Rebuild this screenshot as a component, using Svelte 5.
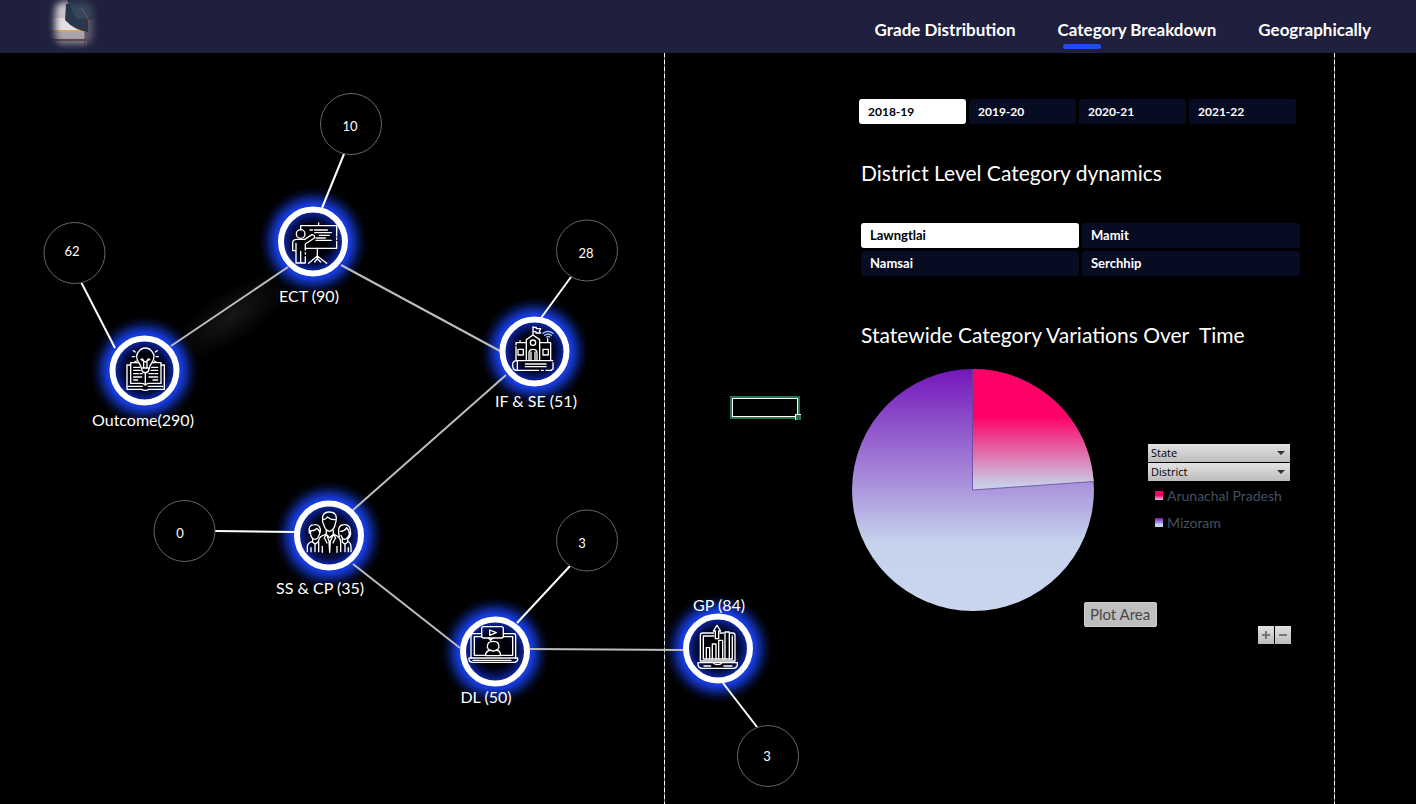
<script>
  const navItems = ['Grade Distribution', 'Category Breakdown', 'Geographically'];
  const years = ['2018-19', '2019-20', '2020-21', '2021-22'];
  const districts = ['Lawngtlai', 'Mamit', 'Namsai', 'Serchhip'];
  let page = $state('Category Breakdown');
  let year = $state('2018-19');
  let district = $state('Lawngtlai');

  const links = [
    [171, 346, 288, 267],
    [341, 265, 500, 351],
    [506, 375, 353, 510],
    [353, 564, 460, 648],
    [530, 649, 684, 650]
  ];
  const bubbles = [
    { value: 10, x: 351, y: 124, tx: 350, ty: 131, line: [344, 154, 322, 208] },
    { value: 62, x: 74.5, y: 253, tx: 72, ty: 256, line: [80, 280, 115, 348] },
    { value: 28, x: 587, y: 250.5, tx: 586, ty: 258, line: [571, 277, 541, 318] },
    { value: 0, x: 184.5, y: 531, tx: 180, ty: 538, line: [215, 531, 295, 532] },
    { value: 3, x: 587, y: 540.5, tx: 582, ty: 548, line: [570, 566, 517, 623] },
    { value: 3, x: 768, y: 756, tx: 767, ty: 761, line: [723, 683, 757, 727] }
  ];
  const nodes = [
    { label: 'ECT (90)', x: 313, y: 241.5, tx: 309, ty: 302 },
    { label: 'Outcome(290)', x: 144.5, y: 370.5, tx: 143, ty: 426 },
    { label: 'IF & SE (51)', x: 534.5, y: 351.5, tx: 536, ty: 407 },
    { label: 'SS & CP (35)', x: 329, y: 535.5, tx: 320, ty: 594 },
    { label: 'DL (50)', x: 495, y: 651.5, tx: 486, ty: 703 },
    { label: 'GP (84)', x: 718, y: 648.5, tx: 719, ty: 611 }
  ];
</script>

<div class="app">
  <header>
    <svg class="logo" viewBox="0 0 100 53" width="100" height="53" role="img" aria-label="Education">
      <defs>
        <filter id="soft" x="-40%" y="-40%" width="180%" height="180%"><feGaussianBlur stdDeviation="3.5" /></filter>
        <filter id="fine"><feGaussianBlur stdDeviation="0.5" /></filter>
        <mask id="fade"><rect x="30" y="2" width="38" height="42" rx="8" fill="#fff" filter="url(#soft)" /></mask>
      </defs>
      <g mask="url(#fade)">
        <rect x="18" y="0" width="42" height="53" fill="#c9c5ca" />
        <rect x="60" y="18" width="16" height="35" fill="#5b596e" />
        <rect x="18" y="18" width="33" height="12" fill="#e4e1e2" />
        <rect x="18" y="30" width="42" height="2" fill="#d9a565" />
        <rect x="18" y="32" width="42" height="7" fill="#aaa4aa" />
        <rect x="18" y="39" width="43" height="2" fill="#6e4a4d" />
        <rect x="18" y="41" width="44" height="10" fill="#8b8991" />
        <g filter="url(#fine)">
          <path d="M41 4 69 0 74 16 64 20 63 32Q49 30 40 20Z" fill="#29394c" />
          <path d="M42 0 72 0 76 18 52 19Z" fill="#35475a" />
          <path d="M56 8 63 18 65 32" fill="none" stroke="#84545c" />
          <path d="M60 31V52" stroke="#6e4a4d" />
        </g>
      </g>
    </svg>
    <nav>
      {#each navItems as item}
        <a href="#{item.replace(' ', '-')}" class:active={page === item} onclick={() => (page = item)}>{item}</a>
      {/each}
    </nav>
  </header>

  <main>
    <svg class="network" viewBox="0 53 851 751" role="img" aria-label="Category network">
      <defs>
        <radialGradient id="glow">
          <stop offset="0" stop-color="#000" />
          <stop offset="0.3" stop-color="#00010a" />
          <stop offset="0.42" stop-color="#050f4c" />
          <stop offset="0.52" stop-color="#0d2396" />
          <stop offset="0.6" stop-color="#1a3ee4" />
          <stop offset="0.68" stop-color="#1539d6" />
          <stop offset="0.78" stop-color="#1130ae" stop-opacity="0.75" />
          <stop offset="0.88" stop-color="#0b2078" stop-opacity="0.4" />
          <stop offset="1" stop-color="#061040" stop-opacity="0" />
        </radialGradient>
        <radialGradient id="haze">
          <stop offset="0" stop-color="#fff" stop-opacity="0.09" />
          <stop offset="1" stop-color="#fff" stop-opacity="0" />
        </radialGradient>
      </defs>

      <path d="M664.5 53V804" stroke="#777" />
      <path d="M664.5 53V804" stroke="#fff" stroke-dasharray="4 3" />
      <ellipse cx="232" cy="316" rx="68" ry="26" fill="url(#haze)" transform="rotate(-34 232 316)" />

      {#each nodes as n}
        <circle cx={n.x} cy={n.y} r="55" fill="url(#glow)" />
      {/each}
      {#each links as [x1, y1, x2, y2]}
        <line {x1} {y1} {x2} {y2} stroke="#bdbdbd" stroke-width="2" />
      {/each}
      {#each bubbles as b}
        <line x1={b.line[0]} y1={b.line[1]} x2={b.line[2]} y2={b.line[3]} stroke="#fff" stroke-width="2" />
        <circle cx={b.x} cy={b.y} r="30.5" fill="#000" stroke="#666" stroke-width="1" />
        <text class="value" x={b.tx} y={b.ty}>{b.value}</text>
      {/each}
      {#each nodes as n}
        <circle cx={n.x} cy={n.y} r="32" fill="none" stroke="#fff" stroke-width="6" />
        <text class="label" x={n.tx} y={n.ty}>{n.label}</text>
      {/each}

      <!-- presenter at a board -->
      <g class="icon" transform="translate(260 190) scale(0.3333)">
        <circle cx="122" cy="132" r="13" />
        <path d="M122 119V107H230V138M230 144V148M230 154V175H136M176 107V99" />
        <path d="M150 120H158M164 120H202M164 128H214M178 136H208M168 144H196M168 151H214" />
        <path d="M172 175V206M172 198 146 220M172 198 200 220M172 206 164 216M172 206 182 216" />
        <path d="M98 182V160Q98 148 110 148H134L156 134Q166 136 163 144L136 162V180M136 188V192M136 200V219H108V160M122 184V219M98 182H108" />
      </g>

      <!-- open book and bulb -->
      <g class="icon" transform="translate(85 320) scale(0.3333)">
        <path d="M170 148Q168 136 160 126Q150 108 160 96Q168 84 181 84Q194 84 202 96Q212 108 202 126Q194 136 192 148Q190 158 181 158Q172 158 170 148ZM172 144H190M168 118Q174 114 176 124V142M194 118Q188 114 186 124V142M168 118 181 126 194 118" />
        <path d="M142 110H149M213 110H220M145 92 151 96M217 92 211 96M148 127 154 123M214 127 208 123" />
        <path d="M161 128H137V190H170Q178 190 181 196Q184 190 192 190H228V128H202M181 160V196" />
        <path d="M137 135H126V208H170Q181 214 192 208H238V135H228M130 199H172M190 199H233" />
        <path d="M146 142H164M146 151H166M146 161H160M165 161H172M146 171H170M146 180H158M200 142H218M198 151H218M192 161H206M210 161H218M192 171H218M204 180H218" />
      </g>

      <!-- school on a book -->
      <g class="icon" transform="translate(480 300) scale(0.3333)">
        <path d="M159 104V80M159 82H169V86H182L178 93L182 99H168V95H159M139 180V119L159 105 179 119V180M139 128H108V134M108 140V180M179 128H212V180M120 128V122M203 128V116" />
        <circle cx="159" cy="128" r="8" />
        <path d="M147 180V158Q147 148 159 148Q171 148 171 158V180M153 180V156M165 180V156M114 148H130V165H114ZM189 148H205V165H189Z" />
        <path d="M218 182H110Q98 182 98 195Q98 211 110 211H176M184 211H190M198 211H214L219 206V188M112 182V211M136 192H198M136 200H198" />
        <path d="M189 100Q203 88 219 100M194 106Q204 98 214 106M200 111Q204 107 209 111" stroke="#a9c8ff" />
      </g>

      <!-- three people -->
      <g class="icon" transform="translate(265 485) scale(0.3333)">
        <path d="M173 105Q170 83 190 81Q213 80 214 98Q214 108 211 116Q208 135 194 139Q180 136 176 118Q171 111 173 102Q181 106 187 96Q196 104 210 104M184 137V148L194 158 205 148V137M183 146 178 160M206 146 212 160" />
        <path d="M181 149Q163 153 161 166V200M208 149Q225 154 227 170V200M187 154 192 168 194 202M203 154 196 168 194 202M172 184V202M216 184V202M180 162 186 174M210 162 204 174" />
        <path d="M133 144Q128 119 148 119Q168 118 166 141M136 137Q149 139 155 130Q165 136 164 146Q159 163 151 163Q140 163 137 149ZM143 163V172L151 178 159 170M143 169Q127 173 127 186V200M150 178V200M138 188V200" />
        <path d="M223 155Q215 119 237 119Q258 117 257 147Q255 157 249 162M227 139Q240 138 245 128Q254 137 253 148Q248 162 239 163Q231 161 228 151M232 161V171L240 178 248 171V162M248 168Q258 173 258 187V200M240 178V200M250 188V200" />
      </g>

      <!-- online class -->
      <g class="icon" transform="translate(445 600) scale(0.3333)">
        <path d="M110 101H83Q78 101 78 108V174M175 101H207Q212 101 212 108V174M110 110H88V166H122M175 110H203V166H166" />
        <rect x="110" y="80" width="65" height="34" rx="6" />
        <path d="M134 90V106L154 98ZM130 114 137 121 144 114" />
        <path d="M127 142Q126 124 145 124Q163 124 162 142Q157 153 145 153Q131 153 127 142ZM122 167V161Q126 151 137 150M153 150Q165 152 166 161V167H122" />
        <path d="M72 174H218V179Q216 187 208 187H82Q74 187 72 179ZM84 181H198M126 174H164" />
      </g>

      <!-- growth chart on a laptop -->
      <g class="icon" transform="translate(670 590) scale(0.3333)">
        <path d="M131 129H98Q91 129 91 136V213H195V136Q195 129 188 129H181M131 138H100V207H187V138M150 129H161" />
        <path d="M109 207V173H119V207M127 207V162H138V207M146 207V151H158V207M165 207V126H178V207" />
        <path d="M136 146V123H130L141 106 152 123H146V146Z" />
        <path d="M84 218H202V225Q200 235 190 235H96Q86 235 84 225ZM130 218Q132 224 143 224Q154 224 156 218M102 228H122M162 228H186" />
      </g>

      <rect x="731" y="397" width="68" height="21" fill="none" stroke="#27734b" stroke-width="2" />
      <rect x="732.5" y="398.5" width="65" height="18" fill="#000" stroke="#fff" />
      <rect x="795" y="414" width="6" height="6" fill="#fff" />
      <rect x="796" y="415" width="5" height="5" fill="#2f6f4d" />
    </svg>

    <section class="panel">
      <div class="years">
        {#each years as y}
          <button class="slicer" class:on={year === y} onclick={() => (year = y)}>{y}</button>
        {/each}
      </div>

      <h2>District Level Category dynamics</h2>
      <div class="districts">
        {#each districts as d}
          <button class="slicer" class:on={district === d} onclick={() => (district = d)}>{d}</button>
        {/each}
      </div>

      <h2 class="second">Statewide Category Variations Over&nbsp; Time</h2>
      <div class="chart">
        <svg class="pie" viewBox="0 0 242 242" role="img" aria-label="Share by state">
          <defs>
            <linearGradient id="violet" x1="0" y1="0" x2="0" y2="1">
              <stop offset="0" stop-color="#7416ba" />
              <stop offset="0.48" stop-color="#aa92dc" />
              <stop offset="0.72" stop-color="#c6d3ec" />
              <stop offset="1" stop-color="#c9d6ee" />
            </linearGradient>
            <linearGradient id="pink" x1="0" y1="0" x2="0" y2="1">
              <stop offset="0" stop-color="#ff0066" />
              <stop offset="0.39" stop-color="#ff0066" />
              <stop offset="0.7" stop-color="#e070ac" />
              <stop offset="0.96" stop-color="#c9cee8" />
            </linearGradient>
          </defs>
          <circle cx="121" cy="121" r="121" fill="url(#violet)" />
          <path d="M121 121V0A121 121 0 0 1 241.700 112.500Z" fill="url(#pink)" />
          <path d="M120.500 0V121L241.700 112.500" fill="none" stroke="#65489a" stroke-width="0.8" />
        </svg>
        <span class="tip">Plot Area</span>
        <div class="legend">
          <select aria-label="State"><option>State</option></select>
          <select aria-label="District"><option>District</option></select>
          <ul>
            <li><i class="key pink"></i>Arunachal Pradesh</li>
            <li><i class="key violet"></i>Mizoram</li>
          </ul>
        </div>
      </div>
      <div class="zoom">
        <button aria-label="Expand field"><svg viewBox="0 0 10 10" width="10" height="10"><path d="M1 5H9M5 1V9" /></svg></button>
        <button aria-label="Collapse field"><svg viewBox="0 0 10 10" width="10" height="10"><path d="M1 5H9" /></svg></button>
      </div>
    </section>
  </main>
</div>

<style>
  :global(body) { margin: 0; background: #000; }
  .app { min-height: 100vh; background: #000; color: #fff; font-family: Lato, "Open Sans", sans-serif; overflow: hidden; }
  header { display: flex; justify-content: space-between; height: 53px; padding: 0 45px 0 25px; background: #1f203d; }
  .logo { display: block; }
  nav { display: flex; gap: 42px; padding-top: 20px; }
  nav a { position: relative; color: #fff; text-decoration: none; font-size: 17px; line-height: 20px; font-weight: 700; white-space: nowrap; }
  nav a.active::after { content: ""; position: absolute; left: 5px; top: 24px; width: 38px; height: 5px; border-radius: 3px; background: #1f4df5; }

  main { display: grid; grid-template-columns: 851fr 484fr 81fr; align-items: stretch; }
  .network { display: block; width: 100%; height: auto; }
  .network text { fill: #fff; text-anchor: middle; }
  .value { font-size: 13px; }
  .label { font-size: 16px; }
  .icon { fill: none; stroke: #fff; stroke-width: 4; stroke-linecap: round; stroke-linejoin: round; }

  .panel {
    padding-top: 46px;
    background: repeating-linear-gradient(#fff 0 4px, #777 4px 7px) right top / 1px 100% no-repeat;
  }
  .years { display: grid; grid-template-columns: repeat(4, 1fr); gap: 3px; padding: 0 39px 0 8px; }
  .districts { display: grid; grid-template-columns: repeat(2, 1fr); gap: 3px; padding: 0 35px 0 10px; }
  .slicer { height: 25px; padding: 0 9px; border: 0; border-radius: 3px; background: #070c22; color: #fff; font: 700 13px/25px Lato, sans-serif; text-align: left; }
  .years .slicer { font-size: 12px; }
  .slicer.on { background: #fff; color: #000; }
  h2 { margin: 35px 0 36px; padding-left: 10px; font-size: 21px; line-height: 28px; font-weight: 400; white-space: nowrap; }
  h2.second { margin: 45px 0 20px; }

  .chart { position: relative; display: flex; align-items: flex-start; justify-content: space-between; padding: 0 45px 0 1px; }
  .pie { display: block; width: 242px; }
  .tip { position: absolute; left: 233px; top: 233px; box-sizing: border-box; height: 25px; padding: 0 6px 0 5px; border: 1px solid #cfcfcf; border-radius: 2px; background: #bfbfbf; color: #484848; font-size: 15px; line-height: 23px; white-space: nowrap; }
  .legend { display: flex; flex-direction: column; gap: 1px; width: 142px; padding-top: 75px; }
  select {
    appearance: none; width: 100%; height: 18px; padding: 0 3px; border: 0; border-radius: 0; color: #000;
    font: 11px/18px "Open Sans", sans-serif;
    background: url("data:image/svg+xml,%3Csvg xmlns='http://www.w3.org/2000/svg' width='8' height='4'%3E%3Cpath d='M0 0H8L4 4Z' fill='%23333'/%3E%3C/svg%3E") right 5px top 7px no-repeat, linear-gradient(#e2e2e2, #bcbcbc);
  }
  ul { margin: 0; padding: 0 0 0 7px; list-style: none; }
  li { display: flex; align-items: center; gap: 4px; height: 27px; color: #44505f; font-size: 14px; white-space: nowrap; }
  .key { width: 8px; height: 9px; }
  .key.pink { background: linear-gradient(#ff0066 50%, #d5cfe8); }
  .key.violet { background: linear-gradient(#7416ba, #c6d3ec 75%); }
  .zoom { display: flex; justify-content: flex-end; gap: 1px; padding: 15px 44px 0 0; }
  .zoom button { display: grid; place-items: center; width: 16px; height: 18px; padding: 0; border: 0; background: linear-gradient(#e2e2e2, #bcbcbc); }
  .zoom path { fill: none; stroke: #777; stroke-width: 2; }
</style>
